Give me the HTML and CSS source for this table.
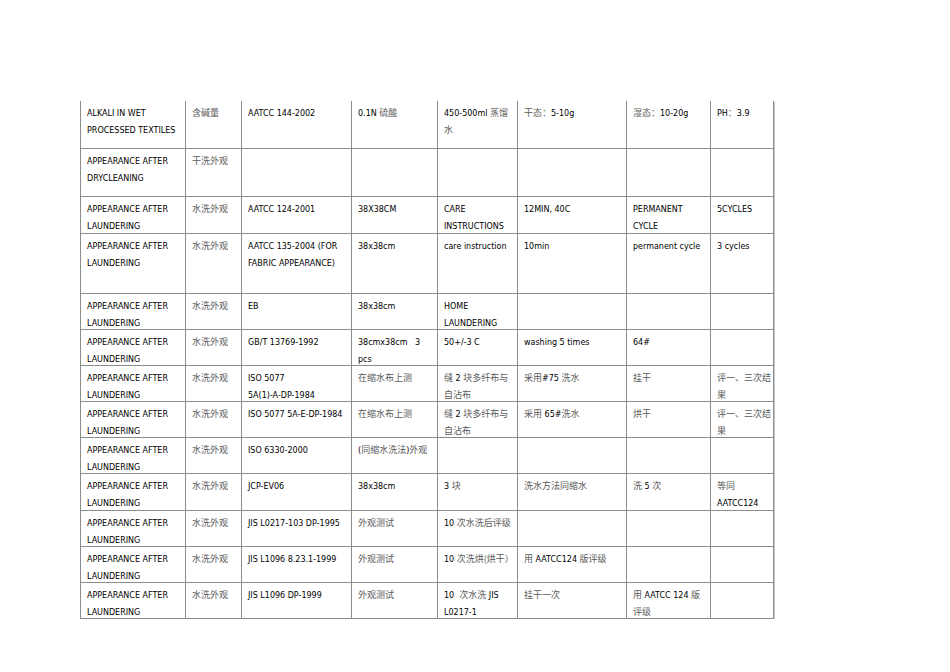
FILE: index.html
```html
<!DOCTYPE html>
<html lang="zh">
<head>
<meta charset="utf-8">
<title>Test methods</title>
<link rel="stylesheet" href="styles.css">
</head>
<body>
<div class="sheet" role="table">
<div class="cell">ALKALI IN WET PROCESSED TEXTILES</div>
<div class="cell"><span class="zh">含碱量</span></div>
<div class="cell">AATCC 144-2002</div>
<div class="cell">0.1N <span class="zh">硫酸</span></div>
<div class="cell">450-500ml <span class="zh">蒸馏</span><span class="zh">水</span></div>
<div class="cell"><span class="zh">干态：</span>5-10g</div>
<div class="cell"><span class="zh">湿态：</span>10-20g</div>
<div class="cell">PH<span class="zh">：</span>3.9</div>

<div class="cell">APPEARANCE AFTER DRYCLEANING</div>
<div class="cell"><span class="zh">干洗外观</span></div>
<div class="cell"></div><div class="cell"></div><div class="cell"></div><div class="cell"></div><div class="cell"></div><div class="cell"></div>

<div class="cell">APPEARANCE AFTER LAUNDERING</div>
<div class="cell"><span class="zh">水洗外观</span></div>
<div class="cell">AATCC 124-2001</div>
<div class="cell">38X38CM</div>
<div class="cell">CARE INSTRUCTIONS</div>
<div class="cell">12MIN, 40C</div>
<div class="cell">PERMANENT CYCLE</div>
<div class="cell">5CYCLES</div>

<div class="cell">APPEARANCE AFTER LAUNDERING</div>
<div class="cell"><span class="zh">水洗外观</span></div>
<div class="cell">AATCC 135-2004 (FOR FABRIC APPEARANCE)</div>
<div class="cell">38x38cm</div>
<div class="cell">care instruction</div>
<div class="cell">10min</div>
<div class="cell">permanent cycle</div>
<div class="cell">3 cycles</div>

<div class="cell">APPEARANCE AFTER LAUNDERING</div>
<div class="cell"><span class="zh">水洗外观</span></div>
<div class="cell">EB</div>
<div class="cell">38x38cm</div>
<div class="cell">HOME LAUNDERING</div>
<div class="cell"></div><div class="cell"></div><div class="cell"></div>

<div class="cell">APPEARANCE AFTER LAUNDERING</div>
<div class="cell"><span class="zh">水洗外观</span></div>
<div class="cell">GB/T 13769-1992</div>
<div class="cell">38cmx38cm&nbsp;&nbsp; 3 pcs</div>
<div class="cell">50+/-3 C</div>
<div class="cell">washing 5 times</div>
<div class="cell">64#</div>
<div class="cell"></div>

<div class="cell">APPEARANCE AFTER LAUNDERING</div>
<div class="cell"><span class="zh">水洗外观</span></div>
<div class="cell">ISO 5077 <span class="nw">5A(1)-A-DP-1984</span></div>
<div class="cell"><span class="zh">在缩水布上测</span></div>
<div class="cell"><span class="zh">缝</span> 2 <span class="zh">块多纤布与</span><span class="zh">自沾布</span></div>
<div class="cell"><span class="zh">采用</span>#75 <span class="zh">洗水</span></div>
<div class="cell"><span class="zh">挂干</span></div>
<div class="cell"><span class="zh">评一、三次结</span><span class="zh">果</span></div>

<div class="cell">APPEARANCE AFTER LAUNDERING</div>
<div class="cell"><span class="zh">水洗外观</span></div>
<div class="cell"><span class="nw">ISO 5077 5A-E-DP-1984</span></div>
<div class="cell"><span class="zh">在缩水布上测</span></div>
<div class="cell"><span class="zh">缝</span> 2 <span class="zh">块多纤布与</span><span class="zh">自沾布</span></div>
<div class="cell"><span class="zh">采用</span> 65#<span class="zh">洗水</span></div>
<div class="cell"><span class="zh">烘干</span></div>
<div class="cell"><span class="zh">评一、三次结</span><span class="zh">果</span></div>

<div class="cell">APPEARANCE AFTER LAUNDERING</div>
<div class="cell"><span class="zh">水洗外观</span></div>
<div class="cell">ISO 6330-2000</div>
<div class="cell">(<span class="zh">同缩水洗法</span>)<span class="zh">外观</span></div>
<div class="cell"></div><div class="cell"></div><div class="cell"></div><div class="cell"></div>

<div class="cell">APPEARANCE AFTER LAUNDERING</div>
<div class="cell"><span class="zh">水洗外观</span></div>
<div class="cell">JCP-EV06</div>
<div class="cell">38x38cm</div>
<div class="cell">3 <span class="zh">块</span></div>
<div class="cell"><span class="zh">洗水方法同缩水</span></div>
<div class="cell"><span class="zh">洗</span> 5 <span class="zh">次</span></div>
<div class="cell"><span class="zh">等同</span> <span>AATCC124</span></div>

<div class="cell">APPEARANCE AFTER LAUNDERING</div>
<div class="cell"><span class="zh">水洗外观</span></div>
<div class="cell">JIS L0217-103 DP-1995</div>
<div class="cell"><span class="zh">外观测试</span></div>
<div class="cell">10 <span class="zh">次水洗后评级</span></div>
<div class="cell"></div><div class="cell"></div><div class="cell"></div>

<div class="cell">APPEARANCE AFTER LAUNDERING</div>
<div class="cell"><span class="zh">水洗外观</span></div>
<div class="cell">JIS L1096 8.23.1-1999</div>
<div class="cell"><span class="zh">外观测试</span></div>
<div class="cell">10 <span class="zh">次洗烘(烘干）</span></div>
<div class="cell"><span class="zh">用</span> AATCC124 <span class="zh">版评级</span></div>
<div class="cell"></div><div class="cell"></div>

<div class="cell">APPEARANCE AFTER LAUNDERING</div>
<div class="cell"><span class="zh">水洗外观</span></div>
<div class="cell">JIS L1096 DP-1999</div>
<div class="cell"><span class="zh">外观测试</span></div>
<div class="cell"><span>10</span>&nbsp; <span class="zh">次水洗</span> <span>JIS</span> <span>L0217-1</span></div>
<div class="cell"><span class="zh">挂干一次</span></div>
<div class="cell"><span class="zh">用</span> <span>AATCC 124</span> <span class="zh">版</span><span class="zh">评级</span></div>
<div class="cell"></div>
</div>
</body>
</html>
```

FILE: styles.css
```css
html, body {
  margin: 0;
  padding: 0;
  background: #ffffff;
}

body {
  font-family: "DejaVu Sans", "Noto Sans CJK SC", sans-serif;
  font-size: 8px;
  color: #000000;
}

.sheet {
  display: grid;
  width: 694px;
  box-sizing: border-box;
  margin: 101px 0 0 80px;
  padding: 0 1px 1px 1px;
  gap: 1px;
  background: #8c8c8c;
  grid-template-columns: 104px 55px 109px 85px 79px 108px 83px 62px;
  grid-template-rows: 47px 47px 36px 59px 35px 35px 35px 35px 35px 36px 35px 35px 35px;
  box-shadow: 1px 1px 0 #c8c8c8;
}

.cell {
  background: #ffffff;
  padding: 4px 2px 0 6px;
  line-height: 17px;
  overflow: visible;
  min-width: 0;
  line-break: strict;
}

.cell:nth-child(8n) {
  padding-right: 0;
}

.nw {
  white-space: nowrap;
}

.zh {
  font-family: "Noto Sans CJK SC", sans-serif;
  font-size: 9px;
  line-height: 10px;
  color: #5a5a5a;
}
```
